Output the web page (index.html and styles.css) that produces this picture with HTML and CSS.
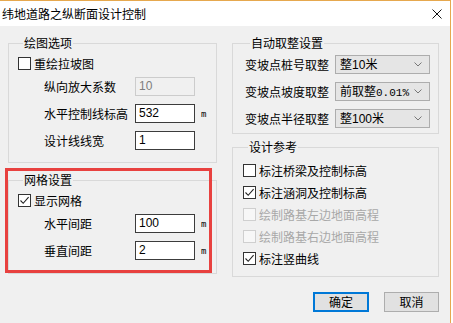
FILE: index.html
```html
<!DOCTYPE html>
<html>
<head>
<meta charset="utf-8">
<link rel="stylesheet" href="styles.css">
</head>
<body>
<div class="window">
  <div class="titlebar">
    <span class="title">纬地道路之纵断面设计控制</span>
    <svg class="close" width="10" height="10" viewBox="0 0 10 10"><path d="M0.5 0.5L9.5 9.5M9.5 0.5L0.5 9.5" stroke="#111" stroke-width="1" fill="none"/></svg>
  </div>
  <div class="body">
    <div class="cols">
      <div class="col col-left">
        <div class="group g-draw">
          <div class="legend">绘图选项</div>
          <div class="check first"><span class="box"></span>重绘拉坡图</div>
          <div class="field first"><span class="flabel">纵向放大系数</span><span class="input disabled">10</span></div>
          <div class="field"><span class="flabel">水平控制线标高</span><span class="input">532</span><span class="unit">m</span></div>
          <div class="field"><span class="flabel">设计线线宽</span><span class="input">1</span></div>
        </div>
        <div class="group g-grid">
          <div class="legend">网格设置</div>
          <div class="check first"><span class="box"><svg width="11" height="11" viewBox="0 0 11 11"><path d="M1.5 5.5L4.2 8.3L9.6 2.2" stroke="#222" stroke-width="1.1" fill="none"/></svg></span>显示网格</div>
          <div class="field first"><span class="flabel">水平间距</span><span class="input">100</span><span class="unit">m</span></div>
          <div class="field"><span class="flabel">垂直间距</span><span class="input">2</span><span class="unit">m</span></div>
        </div>
      </div>
      <div class="col col-right">
        <div class="group g-round">
          <div class="legend">自动取整设置</div>
          <div class="srow first"><span class="slabel">变坡点桩号取整</span><span class="select"><span class="sval">整<span class="num">10</span>米</span><svg class="chev" width="8" height="5" viewBox="0 0 8 5"><path d="M0.5 0.5L4 4L7.5 0.5" stroke="#777" fill="none"/></svg></span></div>
          <div class="srow"><span class="slabel">变坡点坡度取整</span><span class="select"><span class="sval">前取整<span class="mono">0.01%</span></span><svg class="chev" width="8" height="5" viewBox="0 0 8 5"><path d="M0.5 0.5L4 4L7.5 0.5" stroke="#777" fill="none"/></svg></span></div>
          <div class="srow"><span class="slabel">变坡点半径取整</span><span class="select"><span class="sval">整<span class="num">100</span>米</span><svg class="chev" width="8" height="5" viewBox="0 0 8 5"><path d="M0.5 0.5L4 4L7.5 0.5" stroke="#777" fill="none"/></svg></span></div>
        </div>
        <div class="group g-ref">
          <div class="legend">设计参考</div>
          <div class="check first"><span class="box"></span>标注桥梁及控制标高</div>
          <div class="check"><span class="box"><svg width="11" height="11" viewBox="0 0 11 11"><path d="M1.5 5.5L4.2 8.3L9.6 2.2" stroke="#222" stroke-width="1.1" fill="none"/></svg></span>标注涵洞及控制标高</div>
          <div class="check dis"><span class="box"></span>绘制路基左边地面高程</div>
          <div class="check dis"><span class="box"></span>绘制路基右边地面高程</div>
          <div class="check"><span class="box"><svg width="11" height="11" viewBox="0 0 11 11"><path d="M1.5 5.5L4.2 8.3L9.6 2.2" stroke="#222" stroke-width="1.1" fill="none"/></svg></span>标注竖曲线</div>
        </div>
      </div>
    </div>
    <div class="buttons">
      <span class="btn default">确定</span>
      <span class="btn">取消</span>
    </div>
  </div>
  <div class="mark"></div>
</div>
</body>
</html>
```
FILE: styles.css
```css
html, body {
  margin: 0;
  padding: 0;
  background: #ffffff;
}
body {
  font-family: "Noto Sans CJK SC", "Noto Sans", sans-serif;
  font-size: 12px;
  color: #000;
}
.window {
  position: relative;
  width: 450px;
  height: 322px;
  border-top: 1px solid #e6a84e;
  border-right: 1px solid #e6a84e;
  background: #f0f0f0;
  display: flex;
  flex-direction: column;
}
.titlebar {
  height: 25px;
  background: #fff;
  display: flex;
  align-items: center;
  justify-content: space-between;
  padding-left: 2px;
}
.title {
  line-height: 14px;
}
.close {
  margin-right: 8px;
}
.body {
  padding-left: 8px;
}
.cols {
  display: flex;
  align-items: flex-start;
  gap: 15px;
  margin-top: 17px;
}
.col {
  display: flex;
  flex-direction: column;
}
.col-left { width: 209px; }
.col-right { width: 207px; }
.group {
  border: 1px solid #d9d9d9;
  display: flex;
  flex-direction: column;
}
.legend {
  margin: -8px 0 0 5px;
  padding: 0 1px;
  background: #f0f0f0;
  line-height: 14px;
  height: 14px;
  align-self: flex-start;
}
.g-draw { padding: 0 0 12px 9px; }
.g-grid { margin-top: 17px; padding: 0 0 13px 9px; }
.g-round { padding: 0 0 5px 12px; }
.g-ref { margin-top: 13px; padding: 0 0 11px 10px; }

.check {
  display: flex;
  align-items: center;
  height: 13px;
  line-height: 13px;
  margin-top: 9px;
}
.check.first { margin-top: 7px; }
.g-ref .check.first { margin-top: 10px; }
.box {
  width: 11px;
  height: 11px;
  border: 1px solid #333;
  background: #fff;
  margin-right: 3px;
  display: flex;
}
.check.dis { color: #a8a8a8; }
.check.dis .box { border-color: #cfcfcf; background: #f7f7f7; }

.field {
  display: flex;
  align-items: center;
  height: 19px;
  margin-top: 8px;
}
.field.first { margin-top: 7px; }
.flabel {
  width: 91px;
  margin-left: 26px;
}
.input {
  box-sizing: border-box;
  width: 60px;
  height: 19px;
  border: 1px solid #3c3c3c;
  background: #fff;
  padding-left: 3px;
  line-height: 17px;
  font-family: "Liberation Sans", "Noto Sans", sans-serif;
  font-size: 12px;
}
.input.disabled {
  border-color: #cccccc;
  background: #f0f0f0;
  color: #7d7d7d;
}
.unit {
  margin-left: 6px;
  font-family: "DejaVu Sans Mono", monospace;
  font-size: 9px;
}

.srow {
  display: flex;
  align-items: center;
  height: 19px;
  margin-top: 8px;
}
.srow.first { margin-top: 5px; }
.slabel { width: 90px; }
.select {
  box-sizing: border-box;
  width: 95px;
  height: 19px;
  border: 1px solid #adadad;
  background: #e5e5e5;
  display: flex;
  align-items: center;
  justify-content: space-between;
  padding: 0 7px 0 4px;
}
.sval { line-height: 17px; }
.num {
  font-family: "Liberation Sans", "Noto Sans", sans-serif;
}
.mono {
  font-family: "Liberation Mono", monospace;
  font-size: 11px;
}

.buttons {
  width: 431px;
  display: flex;
  justify-content: flex-end;
  gap: 15px;
  margin-top: 15px;
}
.btn {
  box-sizing: border-box;
  width: 55px;
  height: 20px;
  border: 1px solid #adadad;
  background: #e1e1e1;
  display: flex;
  align-items: center;
  justify-content: center;
  line-height: 14px;
}
.btn.default {
  border: 2px solid #0078d7;
  width: 56px;
}
.mark {
  position: absolute;
  left: 5px;
  top: 167px;
  width: 201px;
  height: 99px;
  border: 3px solid #e8413f;
}
```
